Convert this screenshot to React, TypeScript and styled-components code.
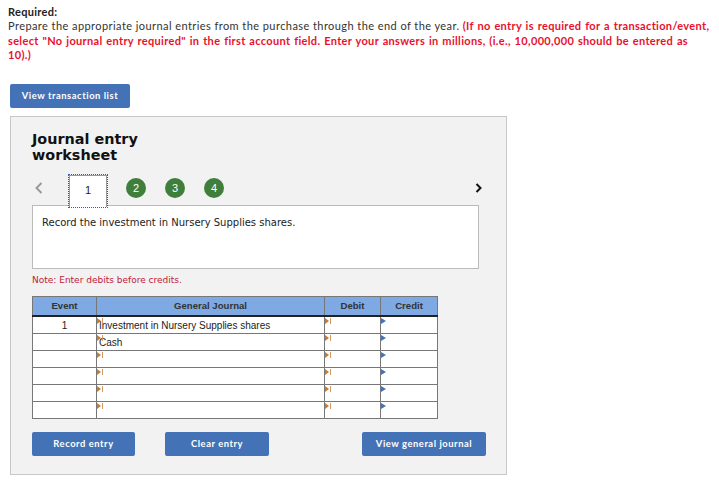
import React from "react";
import styled, { createGlobalStyle } from "styled-components";

const Global = createGlobalStyle`
  html, body { margin: 0; padding: 0; background: #fff; }
  body { font-family: Lato, "Liberation Sans", Arial, sans-serif; }
`;

const Page = styled.div`
  padding: 5px 4px 0 8px;
  width: 719px;
  box-sizing: border-box;
`;

const Instructions = styled.div`
  font-family: Lato, "Liberation Sans", Arial, sans-serif;
  font-size: 11px;
  line-height: 14.3px;
  letter-spacing: 0.43px;
  color: #333;
`;

const Strong = styled.div`
  font-weight: 700;
  color: #222;
  letter-spacing: 0.3px;
`;

const Red = styled.span`
  color: #e8112d;
  font-weight: 700;
  letter-spacing: 0.33px;
  word-spacing: 0.8px;
`;

const BlueButton = styled.button<{ $w: number; $gap?: number }>`
  width: ${(p) => p.$w}px;
  height: 24px;
  margin-left: ${(p) => p.$gap ?? 0}px;
  border: none;
  border-radius: 2px;
  background: #4472b7;
  color: #fff;
  font-family: Lato, "Liberation Sans", Arial, sans-serif;
  font-weight: 700;
  font-size: 9.4px;
  letter-spacing: 0.55px;
  padding: 0;
  cursor: pointer;
`;

const TopButtonRow = styled.div`
  margin: 21px 0 0 2px;
`;

const Panel = styled.div`
  margin: 8px 0 0 2px;
  width: 497px;
  height: 359px;
  box-sizing: border-box;
  background: #f2f2f2;
  border: 1px solid #c8c8c8;
  padding: 14px 0 0 21px;
  font-family: "DejaVu Sans", Verdana, sans-serif;
`;

const Title = styled.h2`
  margin: 0;
  font-family: "DejaVu Sans", Verdana, sans-serif;
  font-weight: 700;
  font-size: 14.4px;
  line-height: 16px;
  color: #111;
  width: 120px;
`;

const NavRow = styled.div`
  display: flex;
  align-items: center;
  margin-top: 12px;
  width: 447px;
  height: 31px;
`;

const Chevron = styled.span<{ $dark?: boolean }>`
  display: flex;
  align-items: center;
  justify-content: center;
  width: 12px;
  margin-left: ${(p) => (p.$dark ? "auto" : "1px")};
  margin-right: ${(p) => (p.$dark ? "-5px" : "0")};
  margin-top: -4px;
`;

const ActiveTab = styled.div`
  width: 38px;
  height: 32px;
  margin-left: 24px;
  margin-top: 1px;
  padding-bottom: 3px;
  box-sizing: border-box;
  background: #fff;
  border: 1px solid #999;
  border-bottom: none;
  outline: 1px dotted #2a5bd0;
  display: flex;
  align-items: center;
  justify-content: center;
  font-family: "Liberation Sans", Arial, sans-serif;
  font-size: 11px;
  color: #222;
  position: relative;
  z-index: 1;
`;

const Step = styled.div`
  width: 20px;
  height: 20px;
  border-radius: 50%;
  background: #3f7f3b;
  color: #fff;
  display: flex;
  align-items: center;
  justify-content: center;
  font-family: "Liberation Sans", Arial, sans-serif;
  font-size: 11px;
  margin-left: 19px;
  margin-top: -5px;
`;

const Desc = styled.div`
  width: 447px;
  height: 64px;
  box-sizing: border-box;
  background: #fff;
  border: 1px solid #bbb;
  padding: 10px 9px;
  font-size: 10px;
  line-height: 14px;
  color: #222;
  margin-top: -1px;
`;

const Note = styled.div`
  margin-top: 6px;
  font-size: 9px;
  line-height: 11px;
  color: #c0213a;
`;

const Table = styled.table`
  margin-top: 10px;
  border-collapse: collapse;
  width: 405px;
  table-layout: fixed;
  font-family: "Liberation Sans", Arial, sans-serif;
  font-size: 10px;
  color: #222;
  background: #fff;
`;

const Th = styled.th<{ $w: number }>`
  width: ${(p) => p.$w}px;
  height: 18px;
  padding: 0;
  background: #7ea9e2;
  border: 1px solid #777;
  border-bottom: 2px solid #222;
  font-weight: 700;
  font-size: 9.6px;
  color: #333;
  text-align: center;
`;

const Td = styled.td<{ $center?: boolean }>`
  height: 16px;
  padding: 0;
  border: 1px solid #777;
  vertical-align: top;
  text-align: ${(p) => (p.$center ? "center" : "left")};
  position: relative;
`;

const CellText = styled.div<{ $indent?: boolean }>`
  padding: 3px 0 0 ${(p) => (p.$indent ? "2px" : "0")};
  line-height: 11px;
  white-space: nowrap;
`;

const Marker = styled.svg`
  position: absolute;
  left: 0;
  top: 1px;
`;

const Flag = ({ blue }: { blue?: boolean }) =>
  blue ? (
    <Marker width="6" height="7" viewBox="0 0 6 7">
      <polygon points="0,0 5,3 0,6" fill="#3f72c8" />
    </Marker>
  ) : (
    <Marker width="7" height="7" viewBox="0 0 7 7">
      <polygon points="0,0 4,3 0,6" fill="#c77a32" />
      <rect x="5" y="0" width="1" height="6" fill="#d49a64" />
    </Marker>
  );

const BottomRow = styled.div`
  display: flex;
  margin-top: 13px;
  width: 454px;
`;

const Spacer = styled.div`
  flex: 1;
`;

const rows = [
  { ev: "1", acct: "Investment in Nursery Supplies shares" },
  { ev: "", acct: "Cash" },
  { ev: "", acct: "" },
  { ev: "", acct: "" },
  { ev: "", acct: "" },
  { ev: "", acct: "" },
];

export default function App() {
  return (
    <>
      <Global />
      <Page>
        <Instructions>
          <Strong>Required:</Strong>
          Prepare the appropriate journal entries from the purchase through the end of the year.{" "}
          <Red>
            (If no entry is required for a transaction/event,
            <br />
            select "No journal entry required" in the first account field. Enter your answers in millions, (i.e.,
            10,000,000 should be entered as
            <br />
            10).)
          </Red>
        </Instructions>
        <TopButtonRow>
          <BlueButton $w={120}>View transaction list</BlueButton>
        </TopButtonRow>
        <Panel>
          <Title>Journal entry worksheet</Title>
          <NavRow>
            <Chevron>
              <svg width="8" height="12" viewBox="0 0 8 12">
                <polyline points="6.5,1 1.5,6 6.5,11" fill="none" stroke="#9a9a9a" strokeWidth="2" />
              </svg>
            </Chevron>
            <ActiveTab>1</ActiveTab>
            <Step>2</Step>
            <Step>3</Step>
            <Step>4</Step>
            <Chevron $dark>
              <svg width="7" height="10" viewBox="0 0 7 10">
                <polyline points="1.5,1 5.5,5 1.5,9" fill="none" stroke="#111" strokeWidth="2" />
              </svg>
            </Chevron>
          </NavRow>
          <Desc>Record the investment in Nursery Supplies shares.</Desc>
          <Note>Note: Enter debits before credits.</Note>
          <Table>
            <thead>
              <tr>
                <Th $w={63}>Event</Th>
                <Th $w={227}>General Journal</Th>
                <Th $w={55}>Debit</Th>
                <Th $w={56}>Credit</Th>
              </tr>
            </thead>
            <tbody>
              {rows.map((r, i) => (
                <tr key={i}>
                  <Td $center>
                    <CellText>{r.ev}</CellText>
                  </Td>
                  <Td>
                    <Flag />
                    <CellText $indent>{r.acct}</CellText>
                  </Td>
                  <Td>
                    <Flag />
                  </Td>
                  <Td>
                    <Flag blue />
                  </Td>
                </tr>
              ))}
            </tbody>
          </Table>
          <BottomRow>
            <BlueButton $w={103}>Record entry</BlueButton>
            <BlueButton $w={104} $gap={30}>Clear entry</BlueButton>
            <Spacer />
            <BlueButton $w={124}>View general journal</BlueButton>
          </BottomRow>
        </Panel>
      </Page>
    </>
  );
}
